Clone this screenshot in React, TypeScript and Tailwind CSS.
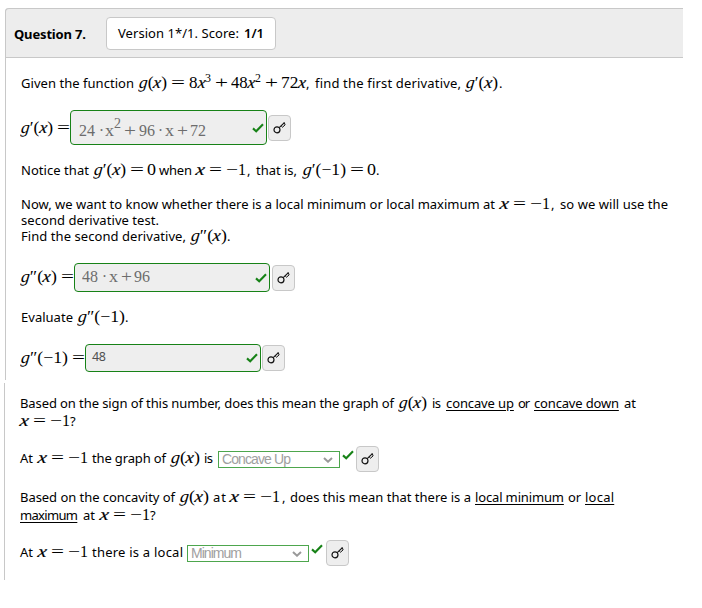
import { useLayoutEffect, useRef, type ReactNode } from 'react';
import clsx from 'clsx';

type FitProps = { c: string; u?: boolean; children: ReactNode };

/* Prose run: letters are spaced evenly so the run fills its box. */
function T({ c, u, children }: FitProps) {
  const ref = useRef<HTMLSpanElement>(null);
  useLayoutEffect(() => {
    const el = ref.current!;
    el.style.letterSpacing = '0px';
    const count = el.textContent!.length;
    const diff = el.parentElement!.clientWidth - el.getBoundingClientRect().width;
    if (count > 1) el.style.letterSpacing = `${diff / (count - 1)}px`;
  }, []);
  return (
    <span className={clsx('block shrink-0 whitespace-pre', c)}>
      <span ref={ref} className={clsx('inline-block', u && 'underline underline-offset-2')}>{children}</span>
    </span>
  );
}

/* Math run: stretched horizontally to the width of its box. */
function M({ c, children }: FitProps) {
  const ref = useRef<HTMLSpanElement>(null);
  useLayoutEffect(() => {
    const el = ref.current!;
    el.style.transform = 'none';
    el.style.transform = `scaleX(${el.parentElement!.clientWidth / el.getBoundingClientRect().width})`;
  }, []);
  return (
    <span className={clsx("block shrink-0 whitespace-pre font-['Liberation_Serif',serif] text-[17px]", c)}>
      <span ref={ref} className="inline-block origin-left">{children}</span>
    </span>
  );
}

const X = () => <i className="relative inline-block h-[12px] -skew-x-6 leading-[12px] italic [-webkit-text-stroke:0.2px_black]">x</i>;
const G = () => <i className="relative inline-block h-[12px] -skew-x-6 leading-[12px] italic">g</i>;
const Gx = ({ p = '' }: { p?: string }) => (
  <><G />{p}(<X />)</>
);
const Sup = ({ children }: { children: ReactNode }) => (
  <span className="relative -top-[6px] text-[12px] leading-none">{children}</span>
);

/* "x = −1" */
const XEq = ({ c }: { c: string }) => (
  <>
    <M c={clsx('w-[9px]', c)}><X /></M>
    <M c="ml-[4px] w-[13px]">=</M>
    <M c="ml-[4px] w-[12px]">−</M>
    <M c="w-[8px]">1</M>
  </>
);

function Row({ c, children }: FitProps) {
  return <div className={clsx('flex h-4 items-baseline', c)}>{children}</div>;
}

function Check({ c }: { c: string }) {
  return (
    <svg viewBox="0 0 12 10" className={clsx('h-[10px] w-[12px] shrink-0', c)}>
      <path d="M1 5.4 L4.2 8.2 L11 1.2" fill="none" stroke="#178217" strokeWidth="2.1" />
    </svg>
  );
}

function KeyButton({ c }: { c: string }) {
  return (
    <button className={clsx('flex h-[26px] w-[23px] shrink-0 items-center justify-center rounded-[4px] border border-[#c8c8c8] bg-[#eeeeee]', c)}>
      <svg viewBox="0 0 13 13" className="-mt-px h-[13px] w-[13px]" fill="none" stroke="#111">
        <circle cx="4" cy="8.8" r="3" strokeWidth="1.2" />
        <path d="M6.2 6.6 L11.4 1.6" strokeWidth="1.2" />
        <path d="M8.2 4.9 L9.5 6.2 L12.1 3.9 L11.2 1.4" strokeWidth="1" />
      </svg>
    </button>
  );
}

function Answer({ c, children }: FitProps) {
  return (
    <div className={clsx('flex shrink-0 justify-between rounded-[4px] border border-[#178217] bg-[#eeeeee] text-[#6c6c6c]', c)}>
      {children}
    </div>
  );
}

function Select({ c, w, label }: { c: string; w: string; label: string }) {
  return (
    <div className={clsx("flex h-[17px] w-[122px] shrink-0 items-center justify-between border border-[#4da64d] bg-white pl-[3px] pr-[6px] font-['Liberation_Sans',sans-serif] text-[14px] leading-[15px] text-[#a0a0a0]", c)}>
      <T c={clsx('-mt-px', w)}>{label}</T>
      <svg viewBox="0 0 10 6" className="h-[6px] w-[10px]" fill="none" stroke="#999" strokeWidth="2">
        <path d="M1 1 L5 4.7 L9 1" />
      </svg>
    </div>
  );
}

export default function App() {
  return (
    <div className="h-[608px] w-[702px] overflow-hidden bg-white pt-2 font-['Noto_Sans','Open_Sans',sans-serif] text-[13px] leading-4 text-black">
      <section className="ml-[5px] h-[372px] w-[678px] rounded-tl-[4px] border-l border-[#c8c8c8]">
        <header className="-ml-px flex h-[50px] rounded-tl-[4px] border border-r-0 border-[#c8c8c8] bg-[#ededed] pl-[8px]">
          <Row c="mt-[17px] font-bold"><T c="w-[72px]">Question 7.</T></Row>
          <div className="ml-[20px] mt-[8px] h-[33px] w-[170px] rounded-[4px] border border-[#c8c8c8] bg-white pl-[11px] pt-[7px]">
            <Row c=""><T c="w-[121px]">Version 1*/1. Score:</T><T c="ml-[5px] w-[20px] font-semibold">1/1</T></Row>
          </div>
        </header>
        <div className="pl-[15px]">
          <Row c="mt-[17px]">
            <T c="w-[113px]">Given the function</T>
            <M c="ml-[5px] w-[28px]"><Gx /></M>
            <M c="ml-[4px] w-[14px]">=</M>
            <M c="ml-[4px] w-[22px]">8<X /><Sup>3</Sup></M>
            <M c="ml-[4px] w-[13px]">+</M>
            <M c="ml-[3px] w-[30px]">48<X /><Sup>2</Sup></M>
            <M c="ml-[4px] w-[13px]">+</M>
            <M c="ml-[3px] w-[25px]">72<X /></M>
            <T c="w-[4px]">,</T>
            <T c="ml-[5px] w-[146px]">find the first derivative,</T>
            <M c="ml-[5px] w-[32px]"><Gx p="′" /></M>
            <T c="ml-px w-[4px]">.</T>
          </Row>
          <div className="mt-[19px] flex h-[35px]">
            <Row c="mt-[10px]">
              <M c="w-[32px]"><Gx p="′" /></M>
              <M c="ml-[4px] w-[13px]">=</M>
            </Row>
            <Answer c="h-[35px] w-[197px] pl-[8px] pr-[2px]">
              <Row c="mt-[12px]">
                <M c="w-[16px]">24</M>
                <M c="ml-[4px] w-[5px]">·</M>
                <M c="ml-px w-[9px]">x</M>
                <M c="w-[7px] relative -top-[8px] text-[14px]!">2</M>
                <M c="ml-[3px] w-[12px]">+</M>
                <M c="ml-[3px] w-[16px]">96</M>
                <M c="ml-[3px] w-[5px]">·</M>
                <M c="ml-[2px] w-[9px]">x</M>
                <M c="ml-[3px] w-[11px]">+</M>
                <M c="ml-[2px] w-[16px]">72</M>
              </Row>
              <Check c="mt-[12px]" />
            </Answer>
            <KeyButton c="ml-[1px] mt-[5px]" />
          </div>
          <Row c="mt-[17px]">
            <T c="w-[68px]">Notice that</T>
            <M c="ml-[5px] w-[32px]"><Gx p="′" /></M>
            <M c="ml-[4px] w-[14px]">=</M>
            <M c="ml-[3px] w-[9px]">0</M>
            <T c="ml-[3px] w-[33px]">when</T>
            <XEq c="ml-[4px]" />
            <T c="ml-px w-[4px]">,</T>
            <T c="ml-[5px] w-[41px]">that is,</T>
            <M c="ml-[6px] w-[43px]"><G />′(−1)</M>
            <M c="ml-[4px] w-[14px]">=</M>
            <M c="ml-[3px] w-[9px]">0</M>
            <T c="w-[4px]">.</T>
          </Row>
          <Row c="mt-[18px]">
            <T c="w-[474px]">Now, we want to know whether there is a local minimum or local maximum at</T>
            <XEq c="ml-[5px]" />
            <T c="ml-px w-[4px]">,</T>
            <T c="ml-[5px] w-[108px]">so we will use the</T>
          </Row>
          <Row c=""><T c="w-[138px]">second derivative test.</T></Row>
          <Row c="">
            <T c="w-[165px]">Find the second derivative,</T>
            <M c="ml-[5px] w-[36px]"><Gx p="″" /></M>
            <T c="w-[4px]">.</T>
          </Row>
          <div className="mt-[19px] flex h-[29px]">
            <Row c="mt-[6px]">
              <M c="w-[36px]"><Gx p="″" /></M>
              <M c="ml-[4px] w-[13px]">=</M>
            </Row>
            <Answer c="h-[29px] w-[196px] pl-[7px] pr-[2px]">
              <Row c="mt-[5px]">
                <M c="w-[16px]">48</M>
                <M c="ml-[4px] w-[5px]">·</M>
                <M c="ml-[2px] w-[9px]">x</M>
                <M c="ml-[3px] w-[11px]">+</M>
                <M c="ml-[2px] w-[16px]">96</M>
              </Row>
              <Check c="mt-[9px]" />
            </Answer>
            <KeyButton c="ml-[2px] mt-[2px]" />
          </div>
          <Row c="mt-[17px]">
            <T c="w-[52px]">Evaluate</T>
            <M c="ml-[5px] w-[47px]"><G />″(−1)</M>
            <T c="w-[4px]">.</T>
          </Row>
          <div className="mt-[19px] flex h-[28px]">
            <Row c="mt-[6px]">
              <M c="w-[47px]"><G />″(−1)</M>
              <M c="ml-[4px] w-[13px]">=</M>
            </Row>
            <Answer c="h-[28px] w-[176px] pl-[6px] pr-[2px]">
              <Row c="mt-[4px] text-[12.5px] text-[#505050]"><T c="w-[14px]">48</T></Row>
              <Check c="mt-[8px]" />
            </Answer>
            <KeyButton c="ml-[1px] mt-[1px]" />
          </div>
        </div>
      </section>
      <section className="ml-[4px] mt-[3px] h-[197px] w-[679px] border-l border-[#c8c8c8] pl-[15px] pt-[12px]">
        <Row c="">
          <T c="w-[374px]">Based on the sign of this number, does this mean the graph of</T>
          <M c="ml-[5px] w-[28px]"><Gx /></M>
          <T c="ml-[5px] w-[9px]">is</T>
          <T u c="ml-[5px] w-[68px]">concave up</T>
          <T c="ml-[4px] w-[12px]">or</T>
          <T u c="ml-[4px] w-[85px]">concave down</T>
          <T c="ml-[5px] w-[12px]">at</T>
        </Row>
        <Row c="mt-[2px]"><XEq c="" /><T c="w-[6px]">?</T></Row>
        <div className="mt-[17px] flex h-[27px]">
          <Row c="mt-[4px]">
            <T c="w-[13px]">At</T>
            <XEq c="ml-[5px]" />
            <T c="ml-[4px] w-[74px]">the graph of</T>
            <M c="ml-[5px] w-[29px]"><Gx /></M>
            <T c="ml-[4px] w-[9px]">is</T>
          </Row>
          <Select c="ml-[5px] mt-[5px]" w="w-[69px]" label="Concave Up" />
          <Check c="ml-[2px] mt-[4px]" />
          <KeyButton c="ml-[2px]" />
        </div>
        <Row c="mt-[16px]">
          <T c="w-[155px]">Based on the concavity of</T>
          <M c="ml-[5px] w-[29px]"><Gx /></M>
          <T c="ml-[4px] w-[13px]">at</T>
          <XEq c="ml-[4px]" />
          <T c="ml-[2px] w-[4px]">,</T>
          <T c="ml-[4px] w-[181px]">does this mean that there is a</T>
          <T u c="ml-[4px] w-[89px]">local minimum</T>
          <T c="ml-[4px] w-[13px]">or</T>
          <T u c="ml-[4px] w-[29px]">local</T>
        </Row>
        <Row c="mt-[2px]">
          <T u c="w-[58px]">maximum</T>
          <T c="ml-[5px] w-[12px]">at</T>
          <XEq c="ml-[5px]" />
          <T c="w-[6px]">?</T>
        </Row>
        <div className="mt-[17px] flex h-[27px]">
          <Row c="mt-[4px]">
            <T c="w-[13px]">At</T>
            <XEq c="ml-[5px]" />
            <T c="ml-[4px] w-[91px]">there is a local</T>
          </Row>
          <Select c="ml-[4px] mt-[5px]" w="w-[51px]" label="Minimum" />
          <Check c="ml-[2px] mt-[4px]" />
          <KeyButton c="ml-[3px]" />
        </div>
      </section>
    </div>
  );
}
